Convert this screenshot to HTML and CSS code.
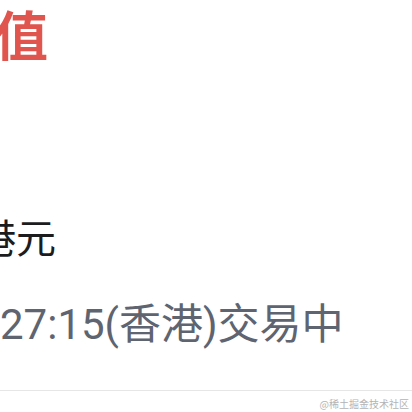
FILE: index.html
```html
<!DOCTYPE html>
<html lang="zh-CN">
<head>
<meta charset="utf-8">
<link rel="stylesheet" href="styles.css">
</head>
<body>
<div class="page">
  <div class="title"><span class="cut-title">市值</span></div>
  <div class="spacer-a"></div>
  <div class="unit"><span class="cut-unit">港元</span></div>
  <div class="status"><span class="cut-status">27:15(香港)交易中</span></div>
  <div class="divider"></div>
  <div class="footer"><span class="mark">@稀土掘金技术社区</span></div>
</div>
</body>
</html>
```

FILE: styles.css
```css
html, body {
  margin: 0;
  padding: 0;
  background: #ffffff;
}
.page {
  width: 412px;
  height: 412px;
  overflow: hidden;
  display: flex;
  flex-direction: column;
  font-family: "Roboto", "Noto Sans CJK SC", sans-serif;
}
.title {
  height: 76px;
  line-height: 76px;
  font-size: 53px;
  font-weight: 700;
  color: #e0564f;
  white-space: nowrap;
}
.cut-title {
  margin-left: -58px;
}
.spacer-a {
  height: 126px;
}
.unit {
  height: 76px;
  line-height: 76px;
  font-size: 40px;
  color: #1c1c1e;
  white-space: nowrap;
}
.cut-unit {
  margin-left: -24px;
}
.status {
  height: 90px;
  line-height: 90px;
  padding-top: 2px;
  font-size: 42px;
  color: #5e6470;
  white-space: nowrap;
}
.cut-status {
  margin-left: 0;
}
.divider {
  height: 1px;
  background: #e6e6e6;
  margin-top: 20px;
}
.footer {
  display: flex;
  justify-content: flex-end;
  padding-right: 3px;
  padding-top: 6px;
}
.mark {
  font-size: 10px;
  line-height: 14px;
  color: #b4b4b4;
  font-family: "Noto Sans CJK SC", sans-serif;
}
```
